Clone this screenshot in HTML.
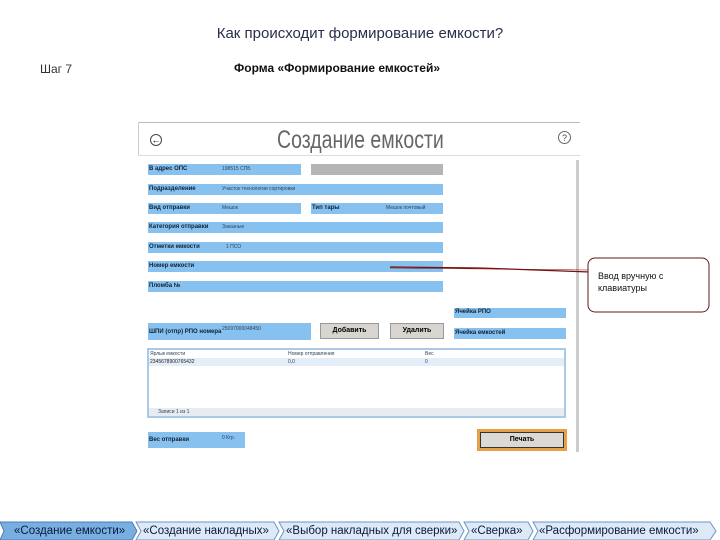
<!DOCTYPE html>
<html><head><meta charset="utf-8"><style>
body{margin:0;width:720px;height:540px;background:#fff;position:relative;overflow:hidden;font-family:"Liberation Sans",sans-serif}
.a{position:absolute;white-space:nowrap}
.b{position:absolute;background:#86c1ef}
.l{position:absolute;font-size:6px;color:#123;font-weight:bold;white-space:nowrap}
.v{position:absolute;font-size:5px;color:#345;white-space:nowrap}
.btn{position:absolute;background:#d8d4d0;border:1px solid #999;font-size:7px;font-weight:bold;text-align:center;box-sizing:border-box}
.t{position:absolute;font-size:11.5px;color:#0a1a40;top:525px;white-space:nowrap}
</style></head><body>
<div class="a" style="left:0;width:720px;top:25px;text-align:center;font-size:15px;color:#2a2f4a">Как происходит формирование емкости?</div>
<div class="a" style="left:40px;top:62px;font-size:12px;color:#333">Шаг 7</div>
<div class="a" style="left:234px;top:61px;font-size:12px;font-weight:bold;color:#111">Форма «Формирование емкостей»</div>

<div class="a" style="left:138px;top:122px;width:442px;height:1px;background:#bbb"></div>
<div class="a" style="left:138px;top:122px;width:1px;height:34px;background:#ccc"></div>
<div class="a" style="left:138px;top:155px;width:442px;height:1px;background:#ddd"></div>
<div class="a" style="left:150px;top:134px;width:12px;height:12px;border:1px solid #444;border-radius:50%;font-size:9px;line-height:11px;text-align:center;box-sizing:border-box">&larr;</div>
<div class="a" style="left:277px;top:126px;font-size:25px;color:#666;transform:scaleX(0.78);transform-origin:0 0">Создание емкости</div>
<div class="a" style="left:558px;top:131px;width:13px;height:13px;border:1px solid #666;border-radius:50%;font-size:9px;line-height:12px;text-align:center;box-sizing:border-box;color:#444">?</div>
<div class="a" style="left:576px;top:160px;width:3px;height:292px;background:#ccc"></div>

<div class="b" style="left:148px;top:164px;width:153px;height:11px"></div>
<div class="a" style="left:311px;top:164px;width:132px;height:11px;background:#b5b5b5"></div>
<div class="b" style="left:148px;top:184px;width:295px;height:11px"></div>
<div class="b" style="left:148px;top:203px;width:153px;height:11px"></div>
<div class="b" style="left:311px;top:203px;width:132px;height:11px"></div>
<div class="b" style="left:148px;top:222px;width:295px;height:11px"></div>
<div class="b" style="left:148px;top:242px;width:295px;height:11px"></div>
<div class="b" style="left:148px;top:261px;width:295px;height:11px"></div>
<div class="b" style="left:148px;top:281px;width:295px;height:11px"></div>
<div class="l" style="left:149px;top:166px">В адрес ОПС</div><div class="v" style="left:222px;top:166px">198515 СПБ</div>
<div class="l" style="left:149px;top:186px">Подразделение</div><div class="v" style="left:222px;top:186px">Участок технологии сортировки</div>
<div class="l" style="left:149px;top:205px">Вид отправки</div><div class="v" style="left:222px;top:205px">Мешок</div>
<div class="l" style="left:312px;top:205px">Тип тары</div><div class="v" style="left:386px;top:205px">Мешок почтовый</div>
<div class="l" style="left:149px;top:224px">Категория отправки</div><div class="v" style="left:222px;top:224px">Заказные</div>
<div class="l" style="left:149px;top:244px">Отметки емкости</div><div class="v" style="left:226px;top:244px">1 ПСО</div>
<div class="l" style="left:149px;top:263px">Номер емкости</div>
<div class="l" style="left:149px;top:283px">Пломба №</div>

<div class="b" style="left:454px;top:308px;width:112px;height:10px"></div>
<div class="b" style="left:454px;top:328px;width:112px;height:11px"></div>
<div class="l" style="left:455px;top:309px">Ячейка РПО</div>
<div class="l" style="left:455px;top:330px">Ячейка емкостей</div>
<div class="b" style="left:148px;top:323px;width:163px;height:17px"></div>
<div class="l" style="left:149px;top:329px">ШПИ (отпр) РПО номера</div><div class="v" style="left:222px;top:326px">25097000048450</div>
<div class="btn" style="left:320px;top:323px;width:59px;height:16px;line-height:14px">Добавить</div>
<div class="btn" style="left:390px;top:323px;width:54px;height:16px;line-height:14px">Удалить</div>

<div class="a" style="left:147px;top:348px;width:419px;height:70px;border:2px solid #a9c9e6;box-sizing:border-box;background:#fff"></div>
<div class="a" style="left:149px;top:358px;width:415px;height:8px;background:#e3eef9"></div>
<div class="v" style="left:150px;top:351px">Ярлык емкости</div><div class="v" style="left:288px;top:351px">Номер отправления</div><div class="v" style="left:425px;top:351px">Вес</div>
<div class="v" style="left:150px;top:359px;color:#222">2345678900765432</div><div class="v" style="left:288px;top:359px">0,0</div><div class="v" style="left:425px;top:359px">0</div>
<div class="a" style="left:149px;top:408px;width:415px;height:8px;background:#e6ecf2"></div>
<div class="v" style="left:158px;top:409px">Записи 1 из 1</div>

<div class="b" style="left:148px;top:432px;width:97px;height:16px"></div>
<div class="l" style="left:149px;top:437px">Вес отправки</div><div class="v" style="left:222px;top:435px">0 Кгр.</div>
<div class="a" style="left:477px;top:429px;width:90px;height:22px;background:#e8a048"></div>
<div class="btn" style="left:480px;top:432px;width:84px;height:16px;line-height:14px;background:#dcd8d4;border-color:#333">Печать</div>

<svg class="a" style="left:0;top:0" width="720" height="540">
<path d="M390 267 L480 268 L590 272" stroke="#7a1010" stroke-width="1.3" fill="none"/>
<path d="M390 268 L590 270" stroke="#7a1010" stroke-width="0.6" fill="none"/>
<rect x="588" y="258" width="121" height="54" rx="7" fill="#fff" stroke="#5a1a1a" stroke-width="1"/>
<path d="M0 522 L4 531 L0 540 L132 540 L137 531 L132 522 Z" fill="#78aee0" stroke="#4a7fb8"/>
<path d="M136 522 L274 522 L279 531 L274 540 L136 540 L141 531 Z" fill="#dde9f6" stroke="#6d95c3"/>
<path d="M279 522 L459 522 L464 531 L459 540 L279 540 L284 531 Z" fill="#dde9f6" stroke="#6d95c3"/>
<path d="M464 522 L528 522 L533 531 L528 540 L464 540 L469 531 Z" fill="#dde9f6" stroke="#6d95c3"/>
<path d="M533 522 L710 522 L716 531 L710 540 L533 540 L538 531 Z" fill="#dde9f6" stroke="#6d95c3"/>
</svg>
<div class="a" style="left:598px;top:270px;font-size:9px;line-height:12px;color:#111">Ввод вручную с<br>клавиатуры</div>
<div class="t" style="left:14px">«Создание емкости»</div>
<div class="t" style="left:143px">«Создание накладных»</div>
<div class="t" style="left:286px">«Выбор накладных для сверки»</div>
<div class="t" style="left:471px">«Сверка»</div>
<div class="t" style="left:539px">«Расформирование емкости»</div>
</body></html>
